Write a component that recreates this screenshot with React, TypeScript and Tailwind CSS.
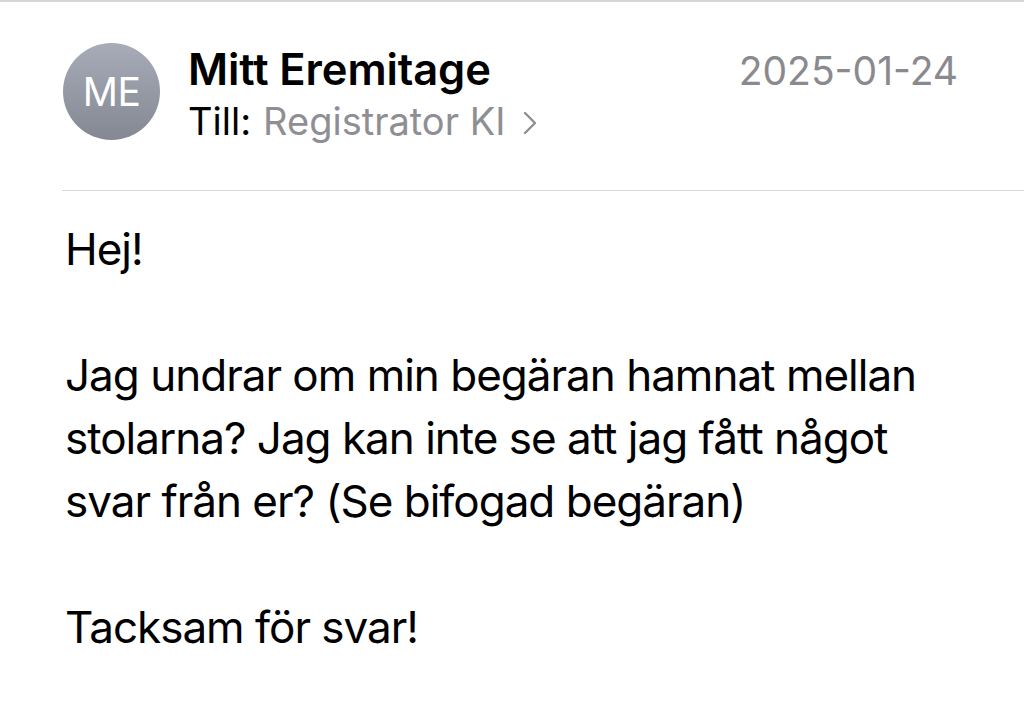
import { ReactNode } from "react";

const font = { fontFamily: "Inter, 'Noto Sans', sans-serif" };

function Avatar({ initials }: { initials: string }) {
  return (
    <div className="flex h-[97px] w-[97px] shrink-0 items-center justify-center rounded-full bg-gradient-to-b from-[#a7acb8] to-[#838893]">
      <span className="text-[39px] font-normal leading-none tracking-[-0.5px] text-white">{initials}</span>
    </div>
  );
}

function Chevron() {
  return (
    <svg width="14" height="24" viewBox="0 0 14 24" className="ml-[18px] mt-[4px]">
      <polyline points="2,2 12,12 2,22" fill="none" stroke="#8e8e93" strokeWidth="2.4" strokeLinecap="round" strokeLinejoin="round" />
    </svg>
  );
}

function Line({ children }: { children?: ReactNode }) {
  return <div className="h-[63px] whitespace-nowrap leading-[63px]">{children}</div>;
}

export default function App() {
  return (
    <div className="min-h-[719px] w-[1024px] overflow-hidden bg-white text-black" style={font}>
      <div className="h-[2px] bg-[#d6d6d6]" />

      <header className="flex items-start pl-[63px] pr-[66px] pt-[41px]">
        <Avatar initials="ME" />
        <div className="ml-[28px] mt-[1px] flex-1">
          <div className="flex h-[50px] items-baseline justify-between">
            <div className="text-[43.5px] font-semibold leading-[50px] tracking-[-0.1px]">Mitt Eremitage</div>
            <div className="text-[39px] leading-[50px] text-[#8a8a8e]">2025-01-24</div>
          </div>
          <div className="mt-[2px] flex items-center text-[38px] leading-[50px]">
            <span className="mr-[12px]">Till:</span>
            <span className="text-[#8e8e93]">Registrator KI</span>
            <Chevron />
          </div>
        </div>
      </header>

      <div className="ml-[62px] mt-[44px] h-px bg-[#d9d9d9]" />

      <main className="pl-[65px] pt-[27px] text-[44px] tracking-[-1px]">
        <Line>Hej!</Line>
        <Line />
        <Line>Jag undrar om min begäran hamnat mellan</Line>
        <Line>stolarna? Jag kan inte se att jag fått något</Line>
        <Line>svar från er? (Se bifogad begäran)</Line>
        <Line />
        <Line>Tacksam för svar!</Line>
      </main>
    </div>
  );
}
